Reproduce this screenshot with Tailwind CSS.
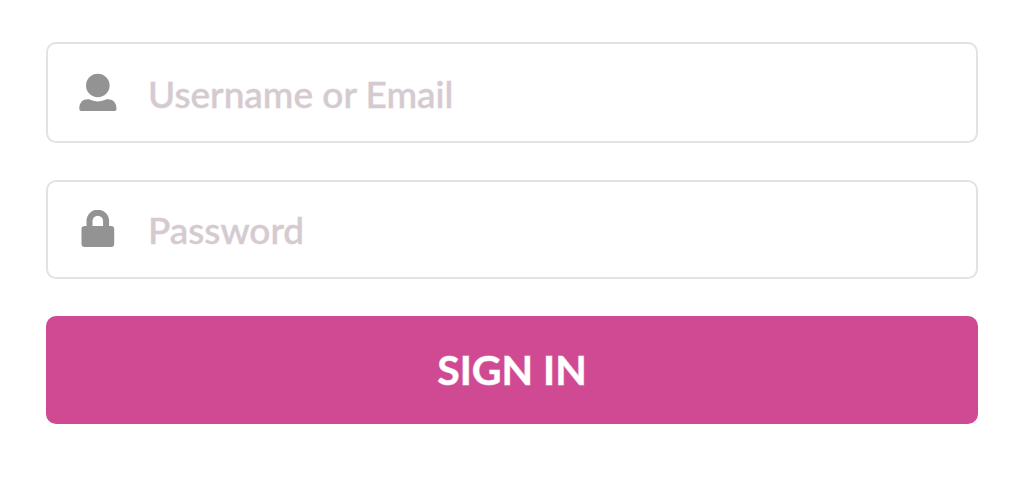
<!DOCTYPE html>
<html lang="en">
<head>
<meta charset="utf-8">
<meta name="viewport" content="width=device-width, initial-scale=1">
<title>Sign in</title>
<script src="https://cdn.jsdelivr.net/npm/@tailwindcss/browser@4"></script>
</head>
<body class="min-h-screen bg-white font-['Lato',sans-serif]">
<form class="flex flex-col px-[46px] pt-[42px] pb-14">
  <div class="flex h-[101px] items-center rounded-[10px] border-2 border-[#e2e2e3] px-[31px]">
    <label for="username" aria-label="Username or Email" class="shrink-0">
      <svg class="block h-[40px] w-[38px]" viewBox="0 0 38 40" fill="#939393" aria-hidden="true">
        <circle cx="18.800" cy="12.500" r="11.800"/>
        <path d="M.3 35.500C.3 29.500 4 26.300 8.500 26.300C12 26.300 13.500 28.500 18.800 28.500S25.500 26.300 29.100 26.300C33.500 26.300 37.500 29.500 37.500 35.500V36Q37.500 38 35.500 38H2.300Q.3 38 .3 36Z"/>
      </svg>
    </label>
    <input id="username" type="text" name="username" placeholder="Username or Email" class="ml-[31px] min-w-0 flex-1 bg-transparent pt-0.5 text-[37px] leading-[48px] font-medium text-gray-700 outline-none placeholder:text-[#d5cad0] placeholder:[-webkit-text-stroke:1px_#d5cad080]">
  </div>
  <div class="mt-[37px] flex h-[99px] items-center rounded-[10px] border-2 border-[#e2e2e3] px-[31px]">
    <label for="password" aria-label="Password" class="shrink-0">
      <svg class="block h-[40px] w-[38px]" viewBox="0 0 38 40" fill="#939393" aria-hidden="true">
        <path fill-rule="evenodd" d="M7.500 16V11a11.300 11.300 0 0 1 22.600 0v5h1.900a3.200 3.200 0 0 1 3.200 3.200v14.600a3.200 3.200 0 0 1-3.200 3.200H5.700a3.200 3.200 0 0 1-3.200-3.200V19.200a3.200 3.200 0 0 1 3.200-3.200ZM13.500 16H24.100V11a5.300 5.300 0 0 0-10.600 0Z"/>
      </svg>
    </label>
    <input id="password" type="password" name="password" placeholder="Password" class="ml-[31px] min-w-0 flex-1 bg-transparent text-[37px] leading-[48px] font-medium text-gray-700 outline-none placeholder:text-[#d5cad0] placeholder:[-webkit-text-stroke:1px_#d5cad080]">
  </div>
  <button type="submit" class="mt-[37px] h-[108px] rounded-[10px] bg-[#d04993] text-[41px] leading-[52px] font-bold text-white [-webkit-text-stroke:1px_#ffffff80]">SIGN IN</button>
</form>
</body>
</html>
